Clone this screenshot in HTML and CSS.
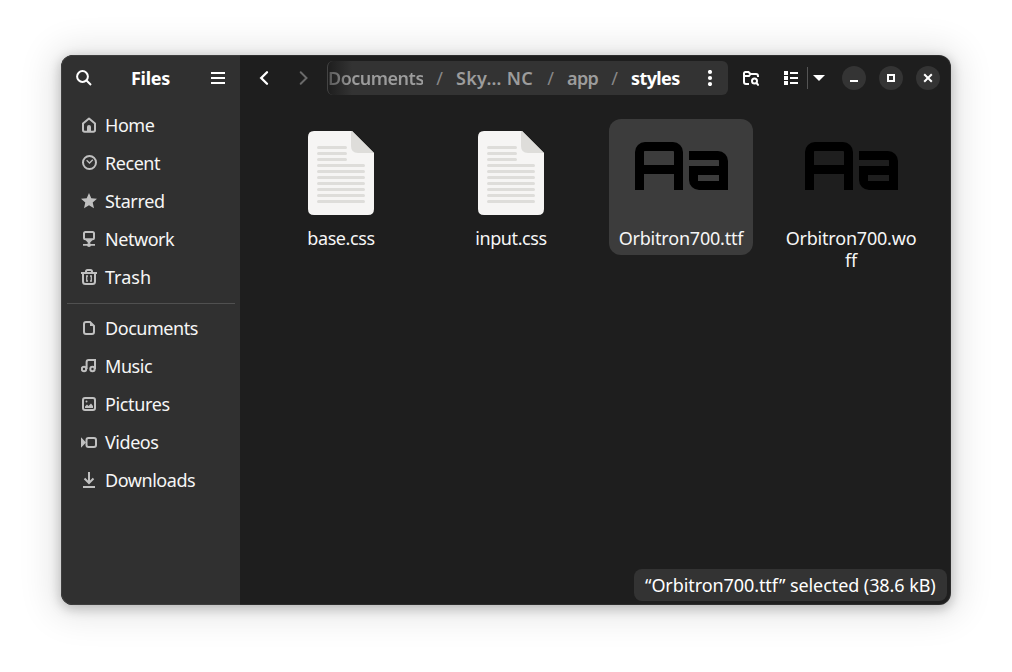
FILE: index.html
```html
<!DOCTYPE html>
<html lang="en">
<head>
<meta charset="utf-8">
<title>Files</title>
<link rel="stylesheet" href="styles.css">
</head>
<body>
<div class="window">
  <aside class="sidebar">
    <header class="side-head">
      <svg class="icon bright" viewBox="0 0 16 16"><circle cx="6.500" cy="6.500" r="5.400"/><path d="M10.300 10.300 15 15"/></svg>
      <h1 class="title">Files</h1>
      <svg class="icon bright" viewBox="0 0 16 16"><path d="M1 3h14M1 8h14M1 13h14"/></svg>
    </header>
    <nav class="places">
      <a class="place"><svg class="icon" viewBox="0 0 16 16"><path stroke-linejoin="round" d="M2 6.500 8 1.500l6 5V13q0 1.700-1.700 1.700H3.700Q2 14.700 2 13z"/><path class="fill" d="M6 15v-5q0-2 2-2t2 2v5z"/></svg><span>Home</span></a>
      <a class="place"><svg class="icon" viewBox="0 0 16 16"><circle cx="8.500" cy="7.500" r="6.500"/><path class="thin" d="M5.600 5.200 8.500 8l3.300-3.300"/></svg><span>Recent</span></a>
      <a class="place"><svg class="icon" viewBox="0 0 16 16"><path class="fill" d="m8 0 2.300 5.200 5.700.6-4.300 3.800L13 15.200l-5-2.900-5 2.900 1.300-5.600L0 5.800l5.700-.6z"/></svg><span class="l-wide">Starred</span></a>
      <a class="place"><svg class="icon" viewBox="0 0 16 16"><rect x="3" y="1" width="10" height="7.200" rx="1.500"/><path class="fill" d="M4.500 9h7L8 13zM2 13h12v1.700H2z"/><circle class="fill" cx="8" cy="14" r="2"/></svg><span>Network</span></a>
      <a class="place"><svg class="icon" viewBox="0 0 16 16"><path d="M0 4h16M5 4V2.500Q5 1 6.500 1h3Q11 1 11 2.500V4M2 4v8.500q0 2.500 2.500 2.500h7q2.500 0 2.500-2.500V4"/><path class="thin" d="M7 7H5.700v5H7M9 7h1.300v5H9"/></svg><span class="l-trash">Trash</span></a>
      <div class="separator"></div>
      <a class="place"><svg class="icon" viewBox="0 0 16 16"><path d="M5 2h4l4 4v6q0 2-2 2H5q-2 0-2-2V4q0-2 2-2z"/><path class="fill" d="M9 2v4h4z"/></svg><span>Documents</span></a>
      <a class="place"><svg class="icon" viewBox="0 0 16 16"><circle cx="3" cy="11" r="2.200"/><circle cx="11.500" cy="11" r="2.200"/><path d="M5.600 11V4q0-2 2-2H14v9"/></svg><span>Music</span></a>
      <a class="place"><svg class="icon" viewBox="0 0 16 16"><rect x="2" y="2" width="12" height="12" rx="2"/><path class="fill" d="M4 12v-1.500L6 8.500l1.500 1.500L10 7.500l2 2.500v2z"/><circle class="fill" cx="5.500" cy="5.500" r="1"/></svg><span class="l-wide">Pictures</span></a>
      <a class="place"><svg class="icon" viewBox="0 0 16 16"><rect x="5.500" y="4" width="9.500" height="9" rx="2"/><path class="fill" d="M0 3.300 5 8.500 0 13.700z"/></svg><span>Videos</span></a>
      <a class="place"><svg class="icon" viewBox="0 0 16 16"><path d="M8 0v10.500M3.500 6.500 8 11l4.500-4.500M2 15h12"/></svg><span>Downloads</span></a>
    </nav>
  </aside>

  <main class="content">
    <header class="toolbar">
      <svg class="icon bright back" viewBox="0 0 16 16"><path stroke-linecap="round" stroke-width="2.300" d="M11 2.200 5.200 8l5.800 5.800"/></svg>
      <svg class="icon dim forward" viewBox="0 0 16 16"><path stroke-linecap="round" d="M5.700 2.200 11.500 8l-5.800 5.800"/></svg>
      <div class="pathbar">
        <span class="crumb c-docs">Documents</span><span class="slash">/</span>
        <span class="crumb c-sky">Sky… NC</span><span class="slash">/</span>
        <span class="crumb c-app">app</span><span class="slash">/</span>
        <span class="crumb c-styles">styles</span>
        <svg class="icon bright dots" viewBox="0 0 16 16"><circle class="fill" cx="8" cy="2" r="2.100"/><circle class="fill" cx="8" cy="8" r="2.100"/><circle class="fill" cx="8" cy="14" r="2.100"/></svg>
      </div>
      <svg class="icon bright find" viewBox="0 0 16 16"><path d="M6 14H3q-2 0-2-2V3.500Q1 2 2.500 2h3l2 2H13q2 0 2 2v1M1 6h5l1.500-2"/><circle cx="11.500" cy="11" r="2.500"/><path d="m13.300 12.800 2.400 2.700"/></svg>
      <svg class="icon bright list" viewBox="0 0 16 16"><path class="fill" d="M1 1h4v4H1zM1 6h4v4H1zM1 11h4v4H1zM7 2h8v2H7zM7 7h8v2H7zM7 12h8v2H7z"/></svg>
      <span class="divider"></span>
      <svg class="arrow" viewBox="0 0 12 6"><path d="M0 0h12L6 6z"/></svg>
      <div class="controls">
        <button class="ctl"><svg class="icon bright" viewBox="0 0 16 16"><path d="M4 11h8"/></svg></button>
        <button class="ctl"><svg class="icon bright" viewBox="0 0 16 16"><path d="M5 5h6v6H5z"/></svg></button>
        <button class="ctl"><svg class="icon bright" viewBox="0 0 16 16"><path d="m4.200 4.200 7.600 7.600m0-7.600-7.600 7.600"/></svg></button>
      </div>
    </header>

    <section class="grid">
      <div class="file">
        <div class="thumb"><svg class="page" viewBox="0 0 66 84"><path fill="#f6f5f4" d="M6 0h38l22 22v56q0 6-6 6H6q-6 0-6-6V6q0-6 6-6z"/><path fill="#deddda" d="M44 0l22 22H50q-7 0-7-7V0z"/><path class="lines" d="M10.500 16.500h27M10.500 22.500h27M10.500 28.500h27M10.500 34.500h45M10.500 40.500h45M10.500 46.500h45M10.500 52.500h45M10.500 58.500h45M10.500 64.500h45M10.500 70.500h45"/></svg></div>
        <span class="name">base.css</span>
      </div>
      <div class="file">
        <div class="thumb"><svg class="page" viewBox="0 0 66 84"><path fill="#f6f5f4" d="M6 0h38l22 22v56q0 6-6 6H6q-6 0-6-6V6q0-6 6-6z"/><path fill="#deddda" d="M44 0l22 22H50q-7 0-7-7V0z"/><path class="lines" d="M10.500 16.500h27M10.500 22.500h27M10.500 28.500h27M10.500 34.500h45M10.500 40.500h45M10.500 46.500h45M10.500 52.500h45M10.500 58.500h45M10.500 64.500h45M10.500 70.500h45"/></svg></div>
        <span class="name">input.css</span>
      </div>
      <div class="file selected">
        <div class="thumb sample" role="img" aria-label="Font preview"><div class="upper"><i></i></div><div class="lower"><i></i></div></div>
        <span class="name n-long">Orbitron700.ttf</span>
      </div>
      <div class="file">
        <div class="thumb sample" role="img" aria-label="Font preview"><div class="upper"><i></i></div><div class="lower"><i></i></div></div>
        <span class="name n-long">Orbitron700.wo<br>ff</span>
      </div>
    </section>
    <footer class="status"><span>“Orbitron700.ttf” selected (38.6 kB)</span></footer>
  </main>
</div>
</body>
</html>
```

FILE: styles.css
```css
* { box-sizing: border-box; }
body {
  margin: 0;
  padding: 55px 61px 67px;
  height: 672px;
  overflow: hidden;
  background: #fff;
  color: #fff;
  font: 18px/22px "Noto Sans", sans-serif;
  letter-spacing: -0.4px;
}
.window {
  display: flex;
  width: 890px;
  height: 550px;
  border-radius: 12px;
  overflow: hidden;
  background: #1e1e1e;
  box-shadow: 0 3px 12px 1px rgba(0,0,0,.22), 0 2px 34px 10px rgba(0,0,0,.1);
  position: relative;
}
.window::after {
  content: "";
  position: absolute;
  inset: 0;
  border-radius: 12px;
  box-shadow: inset 0 0 0 1px rgba(255,255,255,.07);
}
.icon {
  display: block;
  flex: none;
  width: 16px;
  height: 16px;
  fill: none;
  stroke: #c0c0c0;
  stroke-width: 2;
}
.icon .fill { fill: #c0c0c0; stroke: none; }
.icon .thin { stroke-width: 1.3; }
.bright { stroke: #fff; }
.bright .fill { fill: #fff; }
.dim { stroke: #6a6a6a; }

.sidebar { width: 179px; flex: none; background: #303030; }
.side-head {
  display: flex;
  align-items: center;
  justify-content: space-between;
  height: 46px;
  padding: 0 14px 0 15px;
}
.title { margin: 0 1px 0 0; font-size: 18px; font-weight: 700; letter-spacing: -0.25px; }
.places { padding: 6px 5px 0 6px; }
.place { display: flex; align-items: center; gap: 8px; height: 38px; padding: 0 0 2px 14px; color: #f6f6f6; letter-spacing: -0.45px; }
.l-wide { letter-spacing: -0.37px; }
.l-trash { letter-spacing: 0; }
.separator { height: 1px; margin: 6px 0; background: #505050; }

.content { flex: 1; display: flex; flex-direction: column; min-width: 0; }
.toolbar { display: flex; align-items: center; height: 46px; padding: 0 11px 0 16px; }
.forward { margin-left: 23px; }
.pathbar {
  display: flex;
  align-items: center;
  width: 401px;
  height: 34px;
  margin-left: 16px;
  border-radius: 6px;
  border-left: 1px solid #444;
  background: linear-gradient(90deg, #1e1e1e, #333 24px);
  color: #9c9c9c;
  font-weight: 600;
}
.crumb { flex: none; white-space: nowrap; }
.slash { flex: none; width: 33px; text-align: center; font-weight: 400; color: #888; }
.c-docs {
  width: 95px;
  letter-spacing: -0.5px;
  background: linear-gradient(90deg, #555, #9c9c9c 24px);
  background-clip: text;
  -webkit-background-clip: text;
  color: transparent;
}
.c-sky { width: 78px; letter-spacing: 0.3px; }
.c-app { width: 31px; letter-spacing: -0.6px; }
.c-styles { width: 49px; color: #fff; font-weight: 700; letter-spacing: -0.6px; }
.dots { margin-left: 22px; }
.find { margin-left: 15px; }
.list { margin-left: 24px; }
.divider { width: 1px; height: 22px; margin-left: 8px; background: #555; }
.arrow { width: 12px; height: 6px; margin-left: 5px; fill: #fff; }
.controls { display: flex; gap: 13px; margin-left: auto; }
.ctl {
  display: grid;
  place-items: center;
  width: 24px;
  height: 24px;
  padding: 0;
  border: 0;
  border-radius: 50%;
  background: #343434;
}

.grid { display: grid; grid-template-columns: repeat(4, 144px); gap: 26px; align-items: start; padding: 18px 0 0 29px; }
.file { height: 136px; padding-top: 6px; border-radius: 12px; text-align: center; }
.selected { background: #3c3c3c; }
.thumb { height: 96px; padding-top: 6px; }
.page { display: block; width: 66px; height: 84px; margin: 0 auto; }
.lines { stroke: #deddda; stroke-width: 3; stroke-linecap: round; }
.name { display: block; margin-top: 6px; white-space: nowrap; color: #f6f6f6; }
.n-long { letter-spacing: -0.2px; }
.sample { display: flex; gap: 6px; padding: 17px 0 0 26px; }
.upper { width: 48px; height: 48px; border: 9px solid #000; border-bottom: 0; border-radius: 10px 10px 0 0; padding-top: 14px; }
.upper i { display: block; height: 9px; background: #000; }
.lower { width: 39px; height: 39px; margin-top: 9px; border: solid #000; border-width: 9px 9px 0 0; border-radius: 0 10px 0 0; padding-top: 6px; }
.lower i { display: block; height: 24px; border: solid #000; border-width: 9px 0 9px 9px; border-radius: 0 0 0 10px; }
.status {
  align-self: flex-end;
  margin: auto 4px 4px 0;
  width: 313px;
  height: 32px;
  padding: 5px 0 0 11px;
  border-radius: 8px;
  background: #333;
  white-space: nowrap;
  letter-spacing: -0.08px;
}
```
